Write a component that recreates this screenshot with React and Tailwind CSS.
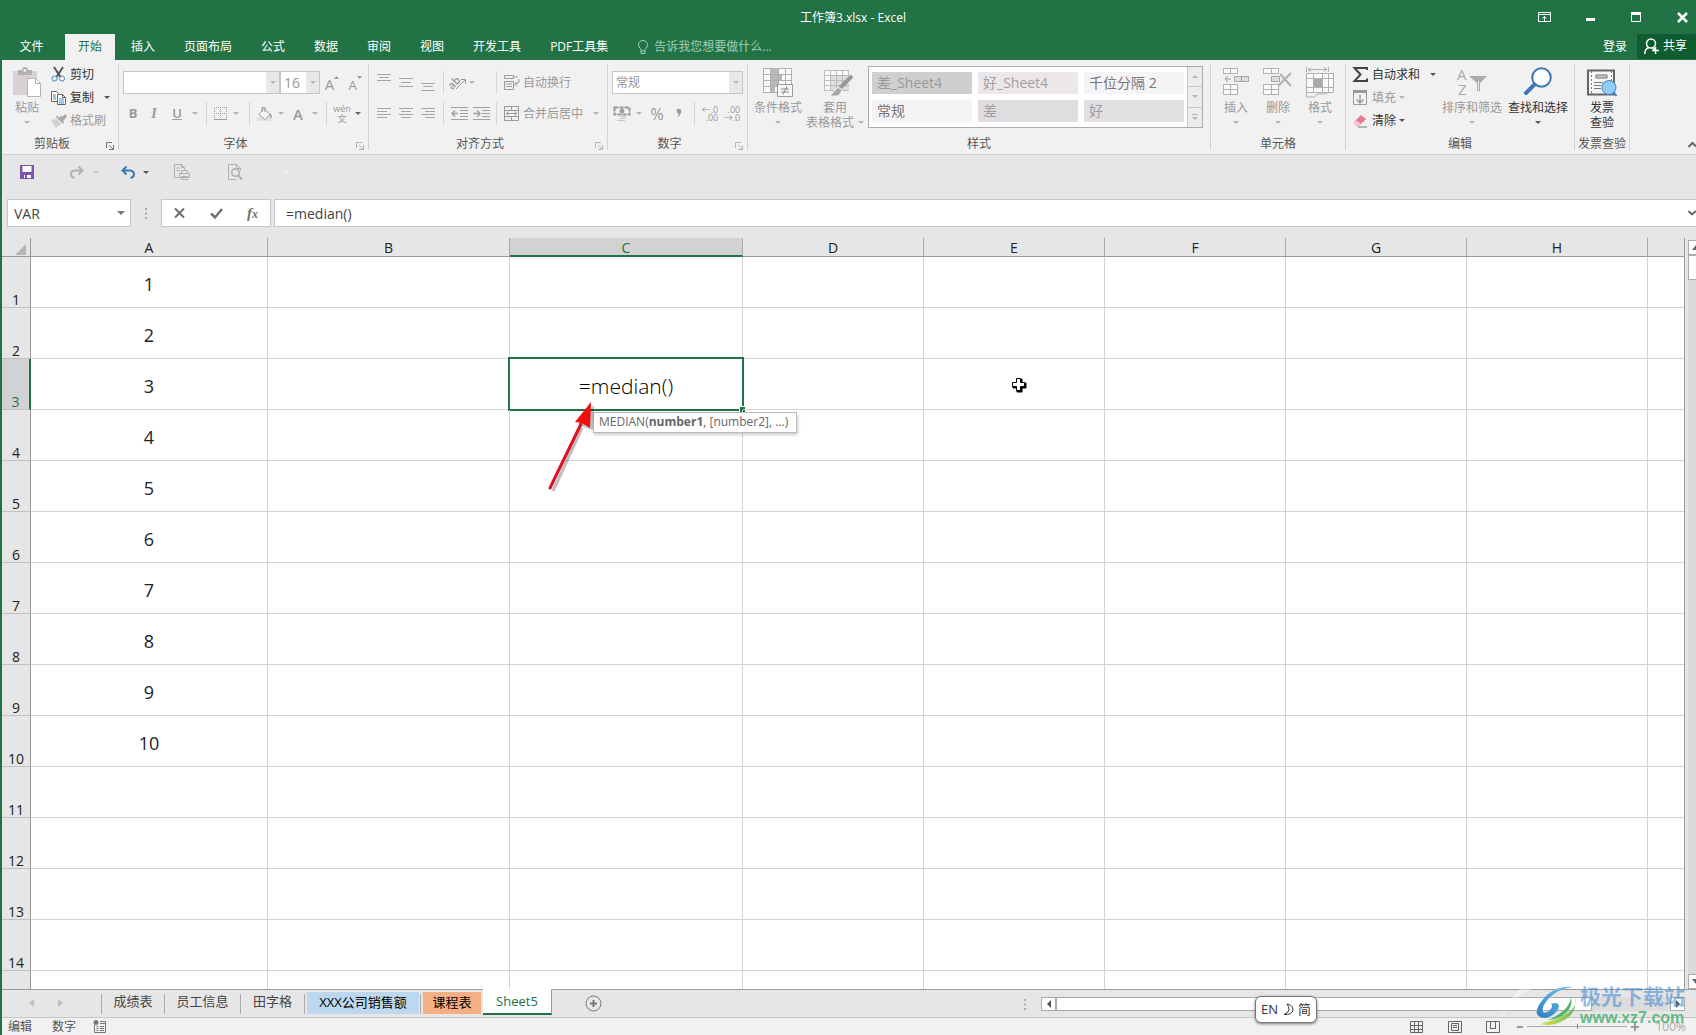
import React from 'react';

const TABS = ['开始', '插入', '页面布局', '公式', '数据', '审阅', '视图', '开发工具', 'PDF工具集'];
const COLUMNS = ['A', 'B', 'C', 'D', 'E', 'F', 'G', 'H', ''];
const ROWS = Array.from({ length: 15 }, (_, i) => i + 1);

const STYLES = [
  { name: '差_Sheet4', cls: 'bg-[#d0cfd0] text-[#999]' },
  { name: '好_Sheet4', cls: 'bg-[#ebe7ea] text-[#a3a0a2]' },
  { name: '千位分隔 2', cls: 'bg-[#f6f3f7] text-[#777]' },
  { name: '常规', cls: 'bg-[#f6f3f7] text-[#777]' },
  { name: '差', cls: 'bg-[#e0dde0] text-[#a09da0]' },
  { name: '好', cls: 'bg-[#e3e0e3] text-[#a09da0]' },
];

const SHEETS = [
  { name: '成绩表', width: 'w-[62px]' },
  { name: '员工信息', width: 'w-[75px]' },
  { name: '田字格', width: 'w-[63px]' },
];

const Icon = ({ w, h, children, className = '' }) => (
  <svg width={w} height={h} viewBox={`0 0 ${w} ${h}`} fill="none" stroke="currentColor" className={`shrink-0 overflow-visible ${className}`} aria-hidden="true">
    {children}
  </svg>
);

const Caret = ({ className = 'text-[#b5b5b5]' }) => (
  <Icon w={6} h={3} className={className}>
    <path d="M0 0h6L3 3z" fill="currentColor" stroke="none" />
  </Icon>
);

const Sep = ({ className = 'mx-1' }) => <div className={`w-px h-[23px] bg-[#d5d5d5] ${className}`}></div>;

const Tool = ({ label, width = 'w-[22px]', children }) => (
  <button aria-label={label} className={`h-[23px] flex items-center justify-center text-[#999] ${width}`}>
    {children}
  </button>
);

const SmallButton = ({ icon, label, active, caret, gap = 'ml-[3px]' }) => (
  <button className={`h-[23px] flex items-center ${active ? 'text-[#333]' : 'text-[#9a9a9a]'}`}>
    <span className="w-[19px] flex items-center">{icon}</span>
    {label}
    {caret && <Caret className={`${gap} ${active ? 'text-[#555]' : 'text-[#b5b5b5]'}`} />}
  </button>
);

const BigButton = ({ icon, label, width, active }) => (
  <button className={`flex flex-col items-center pt-[7px] leading-[15px] whitespace-nowrap ${width} ${active ? 'text-[#333]' : 'text-[#999]'}`}>
    <span className="h-[33px] flex items-start">{icon}</span>
    {label}
    <Caret className={`mt-[6px] ${active ? 'text-[#555]' : 'text-[#b5b5b5]'}`} />
  </button>
);

const Group = ({ title, width, launcher, launcherColor = 'text-[#b5b5b5]', children }) => (
  <>
    <section className={`flex flex-col shrink-0 ${width}`}>
      <div className="flex-1 flex items-start">{children}</div>
      <div className="h-5 flex items-center text-[#555]">
        <span className="flex-1 text-center whitespace-nowrap">{title}</span>
        {launcher && (
          <button aria-label={`${title}设置`} className={`w-4 pl-1 pt-1 ${launcherColor}`}>
            <Icon w={8} h={8}>
              <path d="M0.500 6V0.500H6M3 3l4 4M7.500 3v4.500H3" />
            </Icon>
          </button>
        )}
      </div>
    </section>
    <div className="w-px my-1 bg-[#d2d2d2]"></div>
  </>
);

const Combo = ({ label, value, width }) => (
  <div className={`h-[23px] flex border border-[#c6c6c6] bg-white ${width}`}>
    <select aria-label={label} disabled className="appearance-none flex-1 min-w-0 pl-[3px] bg-white text-[#999] opacity-100">
      <option>{value}</option>
    </select>
    <span className="w-[13px] flex items-center justify-center bg-[#e8e8e8]">
      <Caret />
    </span>
  </div>
);

const PasteIcon = () => (
  <Icon w={28} h={30}>
    <path d="M0 4h24v24H0z" fill="#d6d2d5" stroke="none" />
    <path d="M5 3h4a3 3 0 0 1 6 0h4v5H5z" fill="#b3b1b3" stroke="none" />
    <circle cx="12" cy="3.500" r="1.500" fill="#f1f1f1" stroke="none" />
    <path d="M14.500 11.500h8l5 5v13h-13z" fill="#fff" stroke="#b5b3b5" />
    <path d="M22.500 11.500v5h5" stroke="#b5b3b5" />
  </Icon>
);

const CutIcon = () => (
  <Icon w={15} h={15}>
    <path d="M3 0l6.500 10M12 0L5.500 10" stroke="#555" strokeWidth="2" />
    <circle cx="3.500" cy="11.500" r="2.600" stroke="#4a86c5" />
    <circle cx="11" cy="11.500" r="2.600" stroke="#4a86c5" />
  </Icon>
);

const CopyIcon = () => (
  <Icon w={15} h={14}>
    <path d="M0.500 0.500h5l2 2v8h-7z" fill="#fff" stroke="#666" />
    <path d="M2 4h3M2 6h3M2 8h3" stroke="#4a86c5" />
    <path d="M6.500 3.500h5l3 3v7h-8z" fill="#fff" stroke="#666" />
    <path d="M11.500 3.500v3h3" stroke="#666" />
    <path d="M8 8h5M8 10h5M8 12h5" stroke="#4a86c5" />
  </Icon>
);

const BrushIcon = () => (
  <Icon w={16} h={14}>
    <path d="M0 6l6-1 4 5-5 4z" fill="#d3cfd2" stroke="none" />
    <path d="M5 3l7 7 1-1.500-7-7z" fill="#a5a5a5" stroke="none" />
    <path d="M9 5l2.500-2.500M11 6.500L15 1" stroke="#aaa" strokeWidth="3" />
  </Icon>
);

const Lines = ({ rows }) => (
  <Icon w={14} h={17}>
    {rows.map(([x, y, w]) => (
      <path key={y} d={`M${x} ${y}.5h${w}`} stroke="#a5a5a5" />
    ))}
  </Icon>
);

const TOP = [[0, 0, 14], [2, 3, 10], [0, 6, 14]];
const MIDDLE = [[0, 4, 14], [2, 8, 10], [0, 12, 14]];
const BOTTOM = [[0, 9, 14], [2, 12, 10], [0, 16, 14]];
const LEFT = [[0, 3, 14], [0, 6, 10], [0, 9, 14], [0, 12, 10]];
const CENTER = [[0, 3, 14], [2, 6, 10], [0, 9, 14], [2, 12, 10]];
const RIGHT = [[0, 3, 14], [4, 6, 10], [0, 9, 14], [4, 12, 10]];

const IndentIcon = ({ out }) => (
  <Icon w={17} h={13} className="text-[#a0a0a0]">
    <path d="M0 0.500h17M9 3.500h8M9 6.500h8M9 9.500h8M0 12.500h17" />
    <path d={out ? 'M7 6.500H1M4 3.500l-3 3 3 3' : 'M0 6.500h6M4 3.500l3 3-3 3'} strokeWidth="1.500" />
  </Icon>
);

const ClipboardGroup = () => (
  <Group title="剪贴板" width="w-[116px]" launcher launcherColor="text-[#777]">
    <BigButton width="ml-2 w-[34px]" icon={<PasteIcon />} label="粘贴" />
    <div className="pt-[3px] ml-[7px]">
      <SmallButton icon={<CutIcon />} label="剪切" active />
      <SmallButton icon={<CopyIcon />} label="复制" active caret gap="ml-[10px]" />
      <SmallButton icon={<BrushIcon />} label="格式刷" />
    </div>
  </Group>
);

const FontGroup = () => (
  <Group title="字体" width="w-[249px]" launcher>
    <div className="pt-[11px] pl-[4px] flex flex-col gap-2">
      <div className="flex">
        <Combo label="字体" value="" width="w-[157px]" />
        <div className="text-sm flex"><Combo label="字号" value="16" width="w-[40px]" /></div>
        <Tool label="增大字号" width="w-[24px]">
          <span className="text-[15px] leading-4 pt-[2px]">A</span>
          <Icon w={5} h={14}><path d="M0 3h5L2.500 0z" fill="currentColor" stroke="none" /></Icon>
        </Tool>
        <Tool label="减小字号">
          <span className="text-[13px] leading-4 pt-1">A</span>
          <Icon w={5} h={14}><path d="M0 0h5L2.500 3z" fill="currentColor" stroke="none" /></Icon>
        </Tool>
      </div>
      <div className="flex items-center">
        <Tool label="加粗" width="w-5"><b className="text-[13px]">B</b></Tool>
        <Tool label="倾斜"><i className="text-sm font-['Liberation_Serif',serif] font-bold">I</i></Tool>
        <Tool label="下划线" width="w-6"><u className="text-[13px] font-semibold">U</u></Tool>
        <Tool label="下划线样式" width="w-3"><Caret /></Tool>
        <Sep className="mx-[5px]" />
        <Tool label="边框" width="w-4">
          <Icon w={13} h={13}>
            <path d="M0.500 0v12M6.500 0v12M12.500 0v12M0 0.500h13M0 6.500h13" strokeDasharray="1 1" />
            <path d="M0 12.500h13" />
          </Icon>
        </Tool>
        <Tool label="边框样式" width="w-4"><Caret /></Tool>
        <Sep className="mx-[5px]" />
        <Tool label="填充颜色" width="w-5">
          <Icon w={16} h={16}>
            <path d="M0 11h15v4H0z" fill="#e4dfe3" stroke="none" />
            <path d="M7 2.500l6 6-5 5-6-5z" fill="#f8f8f8" />
            <path d="M5 6V1.500h3V6" />
            <path d="M13 7q3 3 1 5-2-1-1-5" fill="currentColor" stroke="none" />
          </Icon>
        </Tool>
        <Tool label="填充样式" width="w-3"><Caret /></Tool>
        <Tool label="字体颜色"><span className="text-[15px] font-semibold">A</span></Tool>
        <Tool label="颜色样式" width="w-3"><Caret /></Tool>
        <Sep className="mx-[5px]" />
        <Tool label="拼音指南" width="w-5">
          <span className="flex flex-col items-center text-[9px] leading-[10px]"><span>wén</span><span>文</span></span>
        </Tool>
        <Tool label="拼音设置" width="w-3"><Caret className="text-[#666]" /></Tool>
      </div>
    </div>
  </Group>
);

const AlignGroup = () => (
  <Group title="对齐方式" width="w-[238px]" launcher>
    <div className="pt-[11px] pl-[4px] flex flex-col gap-2">
      <div className="flex items-center">
        <Tool label="顶端对齐"><Lines rows={TOP} /></Tool>
        <Tool label="垂直居中"><Lines rows={MIDDLE} /></Tool>
        <Tool label="底端对齐"><Lines rows={BOTTOM} /></Tool>
        <Sep />
        <Tool label="方向" width="w-[44px]">
          <Icon w={17} h={15}>
            <text x="-1" y="12" fontSize="11" fontWeight="600" fill="currentColor" stroke="none" transform="rotate(-45 5 9)">ab</text>
            <path d="M7 14l9-9M12 4.500h4.500V9" />
          </Icon>
          <span className="ml-[3px] mr-4"><Caret /></span>
        </Tool>
        <Sep />
        <button className="h-[23px] pl-[3px] flex items-center gap-1 text-[#999]">
          <Icon w={15} h={15}>
            <path d="M0.500 0.500h9v3h-9zM0.500 6.500h9v8h-9zM2 9h6M2 11.500h6" />
            <path d="M10 2h4M15 4v3q0 2-4 2M13 6.500L10.500 9 13 11.500" />
          </Icon>
          自动换行
        </button>
      </div>
      <div className="flex items-center">
        <Tool label="左对齐"><Lines rows={LEFT} /></Tool>
        <Tool label="居中"><Lines rows={CENTER} /></Tool>
        <Tool label="右对齐"><Lines rows={RIGHT} /></Tool>
        <Sep />
        <Tool label="减少缩进量"><IndentIcon out /></Tool>
        <Tool label="增加缩进量"><IndentIcon /></Tool>
        <Sep />
        <button className="h-[23px] pl-[3px] flex items-center gap-1 text-[#999]">
          <Icon w={15} h={15}>
            <path d="M0.500 0.500h14v14h-14zM0 4.500h15M0 10.500h15M7.500 0v4M7.500 11v4M2 7.500h11M4.500 5.500l-2 2 2 2M10.500 5.500l2 2-2 2" />
          </Icon>
          合并后居中
          <span className="ml-[6px]"><Caret /></span>
        </button>
      </div>
    </div>
  </Group>
);

const NumberGroup = () => (
  <Group title="数字" width="w-[139px]" launcher>
    <div className="pt-[11px] pl-[4px] flex flex-col gap-2">
      <Combo label="数字格式" value="常规" width="w-[131px]" />
      <div className="flex items-center">
        <Tool label="会计数字格式" width="w-5">
          <Icon w={16} h={15}>
            <path d="M0.500 1.500h15v7h-15z" strokeWidth="2" strokeDasharray="4 1" />
            <circle cx="8" cy="5" r="2" fill="currentColor" />
            <path d="M6 10.500h6M6 12.500h6M3 14.500h8" stroke="#c5c5c5" />
          </Icon>
        </Tool>
        <Tool label="会计格式选项" width="w-[14px]"><Caret /></Tool>
        <Tool label="百分比"><span className="text-base">%</span></Tool>
        <Tool label="千位分隔样式">
          <Icon w={6} h={9}>
            <path d="M1 0h3q2 1 1 4T1 8q2-2 1.500-3.500Q0 4 1 0z" fill="currentColor" stroke="none" />
          </Icon>
        </Tool>
        <Sep />
        <Tool label="增加小数位数">
          <span className="text-[9px] leading-[8px] text-right">←.0<br />.00</span>
        </Tool>
        <Tool label="减少小数位数">
          <span className="text-[9px] leading-[8px] text-right">.00<br />→.0</span>
        </Tool>
      </div>
    </div>
  </Group>
);

const StyleGroup = () => (
  <Group title="样式" width="w-[462px]">
    <BigButton
      width="ml-1 w-[52px]"
      label="条件格式"
      icon={
        <Icon w={30} h={30} className="text-[#b0aeb0]">
          <path d="M0.500 1.500h28v24h-28z" fill="#fafafa" />
          <path d="M8 1h7v6H8zM8 7h11v6H8zM8 13h7v6H8zM8 19h4v6H8z" fill="#b9b7b9" stroke="none" />
          <path d="M0 7.500h29M0 13.500h29M0 19.500h29M7.500 1v24M15.500 1v24M22.500 1v24" />
          <path d="M14.500 17.500h15v12h-15z" fill="#f8f8f8" stroke="#999" />
          <path d="M18 22h8M18 25h8M24 19.500l-4 8" stroke="#888" />
        </Icon>
      }
    />
    <button className="ml-px w-[60px] pt-[7px] flex flex-col items-center leading-[15px] text-[#999]">
      <span className="h-[33px] pl-1">
        <Icon w={32} h={30} className="text-[#bcbabc]">
          <path d="M3.500 3.500h24v20h-24z" fill="#fafafa" />
          <path d="M10 9h18v14H10z" fill="#e0dde0" stroke="none" />
          <path d="M3 8.500h25M3 13.500h25M3 18.500h25M9.500 3v20M15.500 3v20M21.500 3v20" />
          <path d="M31 9L19 21" stroke="#999" strokeWidth="4" />
          <path d="M19 21q-3-1-5 2t-5 6q8 1 10-2t2-5z" fill="#aaa" stroke="#f1f1f1" />
        </Icon>
      </span>
      <span>套用</span>
      <span className="flex items-center gap-1">表格格式<Caret /></span>
    </button>
    <div className="mt-[6px] ml-[3px] h-[62px] flex border border-[#ababab] bg-white">
      <div className="px-[3px] py-[5px] grid grid-cols-3 gap-[6px] text-sm">
        {STYLES.map((s) => (
          <button key={s.name} className={`w-[100px] h-[22px] pl-[5px] flex items-center ${s.cls}`}>{s.name}</button>
        ))}
      </div>
      <div className="w-[15px] flex flex-col border-l border-[#c6c6c6] divide-y divide-[#c6c6c6] bg-[#ececec]">
        <button aria-label="向上" className="flex-1 flex items-center justify-center"><span className="rotate-180"><Caret /></span></button>
        <button aria-label="向下" className="flex-1 flex items-center justify-center"><Caret /></button>
        <button aria-label="其他样式" className="flex-1 flex flex-col gap-[2px] items-center justify-center text-[#b5b5b5]">
          <span className="w-[6px] h-px bg-[#b5b5b5]"></span>
          <Caret />
        </button>
      </div>
    </div>
  </Group>
);

const CellsGroup = () => (
  <Group title="单元格" width="w-[134px]">
    <BigButton
      width="ml-1 w-[42px]"
      label="插入"
      icon={
        <Icon w={26} h={28} className="text-[#b0b0b0]">
          <path d="M0.500 1.500h14v5h-14zM7.500 1v6M0.500 17.500h14v10h-14zM7.500 17v10M0 22.500h14" fill="#fafafa" />
          <path d="M11.500 9.500h14v5h-14z" fill="#ddd" stroke="#a5a5a5" />
          <path d="M18.500 9v6M8 12H2M5 9l-3 3 3 3" stroke="#999" />
        </Icon>
      }
    />
    <BigButton
      width="w-[42px]"
      label="删除"
      icon={
        <Icon w={30} h={28} className="text-[#b0b0b0]">
          <path d="M0.500 1.500h15v5h-15zM8.500 1v6M0.500 17.500h15v10h-15zM8.500 17v10M0 22.500h15" fill="#fafafa" />
          <path d="M8.500 9.500h8v5h-8z" fill="#ddd" stroke="#a5a5a5" />
          <path d="M17 7l11 12M28 6L15 19" strokeWidth="2" />
        </Icon>
      }
    />
    <BigButton
      width="w-[42px]"
      label="格式"
      icon={
        <Icon w={28} h={32} className="text-[#b0b0b0]">
          <path d="M0.500 6.500h27v19h-27z" fill="#fafafa" />
          <path d="M0.500 0v5M22.500 0v5M2 2.500h19M5 0.500l-3 2 3 2M18 0.500l3 2-3 2M0 11.500h28M0 20.500h28M7.500 6v20M16.500 6v20M22.500 6v20M0.500 26v4h8l3-3h8l3-2" />
          <path d="M8 12h8v8H8z" fill="#aaa" stroke="none" />
        </Icon>
      }
    />
  </Group>
);

const EditGroup = () => (
  <Group title="编辑" width="w-[228px]">
    <div className="pt-[3px] ml-[7px] w-[86px]">
      <SmallButton
        label="自动求和"
        active
        caret
        gap="ml-[10px]"
        icon={<Icon w={15} h={15}><path d="M14 3V1H1.500l6 6.500-6 6.500H14v-2.500" strokeWidth="2" stroke="#444" /></Icon>}
      />
      <SmallButton
        label="填充"
        caret
        icon={
          <Icon w={15} h={15}>
            <path d="M0.500 0.500h13v14h-13z" />
            <path d="M0 0h14v3H0z" fill="currentColor" stroke="none" />
            <path d="M7 5v8M3.500 9.500L7 13l3.500-3.500" strokeWidth="1.500" />
          </Icon>
        }
      />
      <SmallButton
        label="清除"
        active
        caret
        icon={
          <Icon w={15} h={14}>
            <path d="M1 8l7-7 5 4-7 7H3z" fill="#e8798f" stroke="none" />
            <path d="M1 8l2-2 5 4-2 2.500H3z" fill="#f4c6cf" stroke="none" />
            <path d="M5 13h9" stroke="#777" />
          </Icon>
        }
      />
    </div>
    <BigButton
      width="w-[66px]"
      label="排序和筛选"
      icon={
        <Icon w={30} h={30} className="text-[#aaa]">
          <text x="0" y="13" fontSize="15" fill="currentColor" stroke="none">A</text>
          <text x="1" y="28" fontSize="15" fill="currentColor" stroke="none">Z</text>
          <path d="M12 9h18l-7 7v8h-3v-8z" fill="currentColor" stroke="none" />
          <path d="M21.500 14v9" stroke="#eee" />
        </Icon>
      }
    />
    <BigButton
      width="w-[66px]"
      label="查找和选择"
      active
      icon={
        <Icon w={28} h={28}>
          <circle cx="17.500" cy="10.500" r="9.300" fill="#fff" stroke="#3f77b4" strokeWidth="2" />
          <path d="M10.500 17.500L2 26" stroke="#3f77b4" strokeWidth="4" strokeLinecap="round" />
        </Icon>
      }
    />
  </Group>
);

const InvoiceGroup = () => (
  <Group title="发票查验" width="w-[54px]">
    <button className="w-full pt-[7px] flex flex-col items-center leading-[15px] text-[#333]">
      <span className="h-[33px] pt-[2px]">
        <Icon w={30} h={28}>
          <path d="M1 1.500h26v24H1z" fill="#f6f6f6" stroke="#666" strokeWidth="2" />
          <path d="M4.500 2v24M24.500 2v14" stroke="#777" strokeDasharray="2 2" />
          <path d="M9 6h11v3H9z" fill="#ccc" stroke="#777" />
          <path d="M7 13.500h9M7 16.500h7M7 19.500h7" stroke="#777" />
          <circle cx="22" cy="18.500" r="7" fill="#92cdf5" stroke="#3d83c4" />
          <path d="M26.500 23l3 4" stroke="#3d83c4" strokeWidth="2" />
        </Icon>
      </span>
      <span>发票</span>
      <span>查验</span>
    </button>
  </Group>
);

const TitleBar = () => (
  <header className="bg-[#217346] text-white">
    <div className="h-[34px] grid grid-cols-[1fr_auto_1fr] items-center">
      <span></span>
      <h1 className="pl-2 pt-px">工作簿3.xlsx - Excel</h1>
      <div className="flex justify-end items-center gap-[35px] pr-2">
        <button aria-label="功能区显示选项">
          <Icon w={13} h={10}>
            <path d="M0.500 0.500h12v9h-12zM0 2.500h13M6.500 9V4.500M4.500 6.500l2-2 2 2" />
          </Icon>
        </button>
        <button aria-label="最小化"><Icon w={10} h={10}><path d="M0 7.500h9" strokeWidth="3" /></Icon></button>
        <button aria-label="最大化"><Icon w={11} h={11}><path d="M0.500 0.500h9v9h-9z" /><path d="M0 1.500h10" strokeWidth="3" /></Icon></button>
        <button aria-label="关闭"><Icon w={11} h={11}><path d="M1 1l9 9M10 1l-9 9" strokeWidth="2.500" /></Icon></button>
      </div>
    </div>
    <nav className="h-[26px] flex items-center">
      <button className="w-[63px] h-full pr-1">文件</button>
      <div className="h-full flex gap-[3px]">
        {TABS.map((tab, i) => (
          <button key={tab} className={`px-[13px] h-full ${i === 0 ? 'bg-[#f1f1f1] text-[#217346]' : ''}`}>{tab}</button>
        ))}
      </div>
      <button className="ml-[17px] flex items-center gap-[6px] text-[#a5cdb5]">
        <Icon w={10} h={14}>
          <path d="M3 9.500Q0.500 7 0.500 4.500a4.500 4 0 0 1 9 0Q9.500 7 7 9.500v4H3zM3 11h4" />
        </Icon>
        告诉我您想要做什么...
      </button>
      <button className="ml-auto mr-[10px]">登录</button>
      <button className="h-[25px] self-start pl-[7px] pr-[9px] flex items-center gap-[3px] bg-[#0e5c2f]">
        <Icon w={16} h={17}>
          <circle cx="7" cy="5.500" r="4.500" strokeWidth="1.500" />
          <path d="M0.800 16q0-5 4-6.500M8.500 9.800l2 1.500M11.500 9v7M8 12.500h7" strokeWidth="1.500" />
        </Icon>
        <span className="pb-[2px]">共享</span>
      </button>
    </nav>
  </header>
);

const QuickAccess = () => (
  <div className="h-[45px] pb-[10px] pl-[18px] flex items-center text-[#b0b0b0] border-t border-[#d0d0d0]">
    <button aria-label="保存">
      <Icon w={14} h={14}>
        <path d="M0 0h14v14H0z" fill="#7c55a8" stroke="none" />
        <path d="M2.500 1h9v6h-9zM4 10h7v3H4z" fill="#fff" stroke="none" />
        <path d="M5 10h2v3H5z" fill="#7c55a8" stroke="none" />
      </Icon>
    </button>
    <button aria-label="恢复" className="ml-9 flex items-center gap-[9px]">
      <Icon w={14} h={13}><path d="M12 4.500H5Q1 5 1 8.500 1 11 4.500 12M8.500 0.500l4 4-4 4" strokeWidth="2" /></Icon>
      <Caret className="text-[#c5c5c5]" />
    </button>
    <button aria-label="撤消" className="ml-[22px] flex items-center gap-2">
      <Icon w={14} h={13} className="text-[#3f77b4]"><path d="M2 4.500h7q4 .5 4 4 0 2.500-3.500 3.500M5.500 0.500l-4 4 4 4" strokeWidth="2" /></Icon>
      <Caret className="text-[#555]" />
    </button>
    <button aria-label="快速打印" className="ml-[25px]">
      <Icon w={16} h={16}>
        <path d="M5 13.500H0.500v-13h7l3 3V6M7.500 0.500v3h3M2.500 4h3M2.500 6.500h3" />
        <path d="M5.500 9.500h10v4h-10zM7.500 6.500h6v3h-6zM7.500 12.500h6v3h-6z" fill="#e6e6e6" />
      </Icon>
    </button>
    <button aria-label="打印预览" className="ml-[38px]">
      <Icon w={15} h={16}>
        <path d="M8 15.500H0.500v-15h8l4 4V7M8.500 0.500v4h4" />
        <circle cx="7.500" cy="8.500" r="3.800" strokeWidth="1.500" />
        <path d="M10.500 11.500l3.500 4" strokeWidth="2" />
      </Icon>
    </button>
    <button aria-label="自定义快速访问工具栏" className="ml-[40px] text-[#f4f4f4]">
      <Icon w={5} h={3}><path d="M0 0h5L2.500 3z" fill="currentColor" stroke="none" /></Icon>
    </button>
  </div>
);

const FormulaBar = () => (
  <div className="h-[28px] pl-[5px] flex text-sm text-[#444]">
    <div className="w-[124px] flex items-center border border-[#c6c6c6] bg-white">
      <input aria-label="名称框" defaultValue="VAR" className="flex-1 min-w-0 pl-[6px] pt-px outline-none" />
      <span className="pr-[5px]"><Icon w={8} h={4} className="text-[#777]"><path d="M0 0h8L4 4z" fill="currentColor" stroke="none" /></Icon></span>
    </div>
    <div className="w-[30px] flex items-center justify-center">
      <Icon w={2} h={11} className="text-[#aaa]"><path d="M1 0v2M1 4.500v2M1 9v2" strokeWidth="2" /></Icon>
    </div>
    <div className="w-[110px] px-[12px] flex items-center justify-between border border-[#c6c6c6] bg-white text-[#707070]">
      <button aria-label="取消"><Icon w={11} h={10}><path d="M1 0.500l9 9M10 0.500l-9 9" strokeWidth="2" /></Icon></button>
      <button aria-label="输入"><Icon w={13} h={11}><path d="M1 5.500l4 4L12 1" strokeWidth="2.500" /></Icon></button>
      <button aria-label="插入函数" className="font-['Liberation_Serif',serif] italic font-bold text-[15px] leading-4">f<span className="text-xs">x</span></button>
    </div>
    <div className="ml-[3px] flex-1 flex items-center border border-r-0 border-[#c6c6c6] bg-white">
      <input aria-label="编辑栏" defaultValue="=median()" className="flex-1 pl-[11px] pt-px outline-none" />
      <Icon w={8} h={6} className="text-[#666]"><path d="M0.500 1L4 4.500 8 1" strokeWidth="2" /></Icon>
    </div>
  </div>
);

const ActiveCell = () => (
  <>
    <span className="text-[21px] leading-6 font-light text-black">=median()</span>
    <div className="absolute -left-[2px] -top-[2px] -right-[2px] -bottom-[2px] border-2 border-[#217346]">
      <span className="absolute -right-[3px] -bottom-[3px] w-[6px] h-[6px] bg-[#217346] border-l border-t border-white"></span>
    </div>
    <div className="absolute left-[83px] top-[53px] z-10 h-[21px] px-2 pl-[5px] leading-[17px] text-xs text-[#666] text-left whitespace-nowrap bg-white border border-[#bbb] shadow-[1px_2px_3px_rgba(0,0,0,0.2)]">
      MEDIAN(<b>number1</b>, [number2], ...)
    </div>
    <svg width="52" height="96" viewBox="0 0 52 96" className="absolute left-[34px] top-[41px] z-20" aria-hidden="true">
      <g transform="translate(3 3)" opacity="0.25">
        <path d="M6 88L35 25" stroke="#000" strokeWidth="3" />
        <path d="M47 2L31 21l6 3 9 3z" fill="#000" />
      </g>
      <path d="M6 88L37 24" stroke="#e0101c" strokeWidth="3" strokeLinecap="round" />
      <path d="M47 2L31 22l7 1 8 5z" fill="#f40b0b" />
    </svg>
  </>
);

const CrossCursor = () => (
  <svg width="16" height="16" viewBox="0 0 16 16" className="absolute left-[87px] top-[18px]" aria-hidden="true">
    <path d="M6 2h5v4h4v5h-4v4H6v-4H2V6h4z" fill="#000" stroke="#000" />
    <path d="M5.500 1.500h4v4h4v4h-4v4h-4v-4h-4v-4h4z" fill="#fff" stroke="#000" />
  </svg>
);

const Grid = () => (
  <div className="flex-1 min-h-0 flex overflow-hidden">
    <div className="flex-1 min-w-0 overflow-hidden border-r border-[#999]">
      <table className="w-full table-fixed border-separate border-spacing-0">
        <colgroup>
          <col className="w-[29px]" />
          <col className="w-[237px]" />
          <col className="w-[242px]" />
          <col className="w-[233px]" />
          <col className="w-[181px]" />
          <col className="w-[181px]" />
          <col className="w-[181px]" />
          <col className="w-[181px]" />
          <col className="w-[181px]" />
          <col />
        </colgroup>
        <thead>
          <tr className="h-[19px] bg-[#e6e6e6] text-sm leading-[16px]">
            <th className="p-0 border-r border-b border-[#999]">
              <Icon w={11} h={11} className="ml-auto mr-1 mt-1 block"><path d="M11 0v11H0z" fill="#b5b5b5" stroke="none" /></Icon>
            </th>
            {COLUMNS.map((col) => (
              <th
                key={col}
                className={`p-0 h-[19px] font-normal border-r border-[#aaa] align-bottom ${
                  col === 'C' ? 'bg-[#d2d2d2] text-[#217346] border-b-2 border-b-[#217346] leading-[15px]' : 'text-[#222] border-b border-b-[#999]'
                } ${col === '' ? 'border-r-0' : ''}`}
              >
                {col}
              </th>
            ))}
          </tr>
        </thead>
        <tbody>
          {ROWS.map((row) => (
            <tr key={row} className="h-[51px] bg-white">
              <th
                className={`p-0 h-[51px] align-bottom text-sm leading-[15px] font-normal border-b border-b-[#c0c0c0] ${
                  row === 3 ? 'bg-[#d2d2d2] text-[#217346] border-r-2 border-r-[#217346]' : 'bg-[#e6e6e6] text-[#222] border-r border-r-[#999]'
                }`}
              >
                {row}
              </th>
              {COLUMNS.map((col) => (
                <td key={col} className={`relative p-0 pt-[3px] text-center border-b border-[#d4d4d4] ${col === '' ? '' : 'border-r'}`}>
                  {col === 'A' && row <= 10 && <span className="text-lg leading-6 text-[#222]">{row}</span>}
                  {col === 'C' && row === 3 && <ActiveCell />}
                  {col === 'E' && row === 3 && <CrossCursor />}
                </td>
              ))}
            </tr>
          ))}
        </tbody>
      </table>
    </div>
    <div className="w-[11px] pl-[3px] pt-[2px] flex flex-col overflow-hidden text-[#666]">
      <button aria-label="向上滚动" className="w-4 h-[15px] pl-[3px] flex items-center bg-white border border-[#ababab]">
        <Icon w={8} h={5}><path d="M0 5h8L4 0z" fill="currentColor" stroke="none" /></Icon>
      </button>
      <div className="w-4 h-[25px] shrink-0 bg-white border border-[#ababab]"></div>
      <div className="w-4 flex-1 bg-[#d9d9d9]"></div>
      <button aria-label="向下滚动" className="w-4 h-[15px] pl-[3px] flex items-center bg-white border border-[#ababab]">
        <Icon w={8} h={5}><path d="M0 0h8L4 5z" fill="currentColor" stroke="none" /></Icon>
      </button>
    </div>
  </div>
);

const SheetBar = () => (
  <div className="h-[28px] flex items-start border-t border-[#999] text-[13px] text-[#444]">
    <div className="w-[99px] h-[25px] pl-[27px] flex items-center gap-[24px] text-[#c0c0c0]">
      <button aria-label="上一个工作表"><Icon w={5} h={8}><path d="M5 0v8L0 4z" fill="currentColor" stroke="none" /></Icon></button>
      <button aria-label="下一个工作表"><Icon w={5} h={8}><path d="M0 0v8l5-4z" fill="currentColor" stroke="none" /></Icon></button>
    </div>
    {SHEETS.map((s) => (
      <React.Fragment key={s.name}>
        <div className="w-px h-5 mt-1 bg-[#ababab]"></div>
        <button className={`h-6 ${s.width}`}>{s.name}</button>
      </React.Fragment>
    ))}
    <div className="w-px h-5 mt-1 bg-[#ababab]"></div>
    <button className="w-[112px] h-[22px] mt-[2px] ml-[2px] pb-[2px] leading-5 bg-[#bdd7ee] text-black">XXX公司销售额</button>
    <div className="w-px h-5 mt-1 ml-px bg-[#ababab]"></div>
    <button className="w-[58px] h-[22px] mt-[2px] ml-[2px] pb-[2px] leading-5 bg-[#f4b084] text-black">课程表</button>
    <button className="w-[69px] h-[26px] ml-[2px] -mt-px pt-px bg-white text-[#217346] border-b-2 border-[#217346] border-r border-r-[#999]">Sheet5</button>
    <button aria-label="新建工作表" className="ml-[33px] mt-[5px] text-[#777]">
      <Icon w={17} h={17}><circle cx="8.500" cy="8.500" r="7.500" /><path d="M8.500 5v7M5 8.500h7" strokeWidth="2" /></Icon>
    </button>
    <div className="ml-auto w-[672px] pr-[11px] mt-[7px] h-[14px] flex items-center text-[#555]">
      <Icon w={2} h={11} className="mr-[15px] text-[#aaa]"><path d="M1 0v2M1 4.500v2M1 9v2" strokeWidth="2" /></Icon>
      <button aria-label="向左滚动" className="w-[15px] h-full flex items-center justify-center bg-white border border-[#ababab]">
        <Icon w={4} h={8}><path d="M4 0v8L0 4z" fill="currentColor" stroke="none" /></Icon>
      </button>
      <div className="flex-1 h-full bg-white border border-[#ababab]"></div>
      <div className="w-[78px] h-full bg-[#dcdcdc]"></div>
      <button aria-label="向右滚动" className="w-[15px] h-full flex items-center justify-center bg-white border border-[#ababab]">
        <Icon w={4} h={8}><path d="M0 0v8l4-4z" fill="currentColor" stroke="none" /></Icon>
      </button>
    </div>
  </div>
);

const StatusBar = () => (
  <footer className="h-[18px] pl-[6px] pr-[10px] flex items-center bg-[#f1f1f1] border-t border-[#c6c6c6] text-[#555]">
    <span>编辑</span>
    <span className="ml-5">数字</span>
    <Icon w={13} h={13} className="ml-[17px] text-[#777]">
      <path d="M1.500 5v7.500h11v-11H7M7 3.500h5" />
      <circle cx="3" cy="2.500" r="2.500" fill="currentColor" stroke="none" />
      <path d="M3.500 6.500h2M7 6.500h4M3.500 8.500h2M7 8.500h4M3.500 10.500h2M7 10.500h4" />
    </Icon>
    <div className="ml-auto flex items-center text-[#666]">
      <button aria-label="普通视图"><Icon w={13} h={12}><path d="M0.500 0.500h12v11h-12zM4.500 0v12M8.500 0v12M0 4.500h13M0 8.500h13" /></Icon></button>
      <button aria-label="页面布局视图" className="ml-[25px]"><Icon w={14} h={12}><path d="M0.500 0.500h13v11h-13zM3.500 2.500h7v7h-7zM5 4.500h4M5 6.500h4" /></Icon></button>
      <button aria-label="分页预览" className="ml-[24px]"><Icon w={14} h={12}><path d="M0.500 0.500h13v11h-13zM4.500 0v7M9.500 0v7M4 7.500h6" /></Icon></button>
      <button aria-label="缩小" className="ml-[17px]"><Icon w={6} h={2}><path d="M0 1h6" strokeWidth="2" stroke="#999" /></Icon></button>
      <input
        type="range"
        aria-label="显示比例"
        className="ml-1 w-[100px] h-px appearance-none bg-[#aaa] [&::-webkit-slider-thumb]:appearance-none [&::-webkit-slider-thumb]:w-px [&::-webkit-slider-thumb]:h-[5px] [&::-webkit-slider-thumb]:bg-[#888]"
      />
      <button aria-label="放大" className="ml-1"><Icon w={8} h={8}><path d="M0 4h8M4 0v8" strokeWidth="2" stroke="#999" /></Icon></button>
      <span className="w-[47px] text-right text-[#aaa]">100%</span>
    </div>
  </footer>
);

const Watermark = () => (
  <div className="absolute right-[11px] bottom-[7px] z-20 flex items-center pointer-events-none">
    <svg width="44" height="42" viewBox="0 0 44 42" className="overflow-visible" aria-hidden="true">
      <defs>
        <linearGradient id="swooshBlue" x1="1" y1="0" x2="0" y2="1">
          <stop offset="0" stopColor="#7cc4ea" />
          <stop offset="1" stopColor="#2a7fc4" />
        </linearGradient>
        <linearGradient id="swooshGreen" x1="1" y1="0" x2="0" y2="1">
          <stop offset="0" stopColor="#3fae6a" />
          <stop offset="1" stopColor="#d8e04a" />
        </linearGradient>
      </defs>
      <path d="M-36 32Q-20 10 4 0L-16 3Q-28 16-36 32z" fill="#fff" opacity="0.4" />
      <path d="M37 2Q22 0 11 10-1 22 1 29q4 6 12 3 9-4 10-11-1-5-8-2 2 1 0 5-4 5-8 3-2-5 6-14Q22 4 37 2z" fill="url(#swooshBlue)" />
      <path d="M39 12q3 9-6 15-8 6-15 8l-14 4q10 3 21-2 17-8 14-25z" fill="url(#swooshGreen)" />
      <path d="M35 11q0 11-15 20-4 3-9 4 12 0 20-8 6-7 4-16z" fill="#4fb56f" />
    </svg>
    <div className="flex flex-col">
      <span className="text-[21px] leading-6 font-bold text-[#4a90d0]/60">极光下载站</span>
      <span className="text-base leading-5 font-bold text-[#3fae6a]/80 font-['Liberation_Sans',sans-serif]">www.xz7.com</span>
    </div>
  </div>
);

export default function App() {
  return (
    <div className="relative h-screen flex flex-col overflow-hidden bg-[#e6e6e6] border-l-2 border-[#217346] text-xs font-['Open_Sans','Noto_Sans_CJK_SC',sans-serif]">
      <TitleBar />
      <div className="h-[94px] flex bg-[#f1f1f1]">
        <ClipboardGroup />
        <FontGroup />
        <AlignGroup />
        <NumberGroup />
        <StyleGroup />
        <CellsGroup />
        <EditGroup />
        <InvoiceGroup />
        <button aria-label="折叠功能区" className="ml-auto self-end pb-[6px] text-[#666]">
          <Icon w={8} h={6}><path d="M0.500 5L4.500 1 8 4.500" strokeWidth="2" /></Icon>
        </button>
      </div>
      <QuickAccess />
      <FormulaBar />
      <div className="h-[11px]"></div>
      <Grid />
      <SheetBar />
      <StatusBar />
      <div className="absolute right-[379px] bottom-[12px] z-20 h-[27px] px-[5px] flex items-center gap-1 rounded-md border border-[#777] bg-white text-[13px] text-[#333] shadow-[0_1px_3px_rgba(0,0,0,0.5)]">
        <span>EN</span>
        <Icon w={12} h={13}><path d="M5 1q6 1 6 6-1 5-9 4.500 5-2 5-5T5 1z" /></Icon>
        <span>简</span>
      </div>
      <Watermark />
    </div>
  );
}
